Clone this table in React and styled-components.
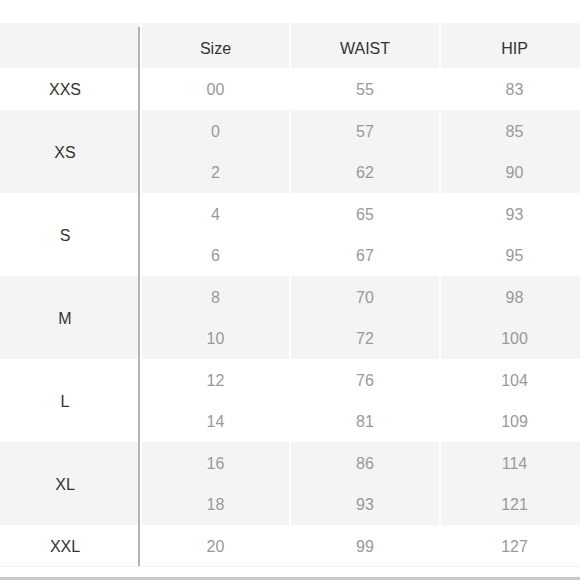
import React from "react";
import styled, { createGlobalStyle } from "styled-components";

const Global = createGlobalStyle`
  html, body { margin: 0; padding: 0; background: #fff; }
  body { width: 580px; height: 580px; overflow: hidden; font-family: "Liberation Sans", Arial, sans-serif; }
`;

const Page = styled.div`
  width: 580px;
  height: 580px;
  overflow: hidden;
  display: flex;
  flex-direction: column;
  padding-top: 23px;
  box-sizing: border-box;
`;

const Table = styled.div`
  margin-left: -8px;
  width: 598px;
  display: grid;
  grid-template-columns: 148px 147px 148px 147px;
  grid-template-rows: 45px;
  grid-auto-rows: 41.5px;
  column-gap: 2px;
  border-bottom: 1px solid #f2f2f2;
`;

const HeadCell = styled.div`
  background: #f4f4f4;
  display: flex;
  align-items: center;
  justify-content: center;
  padding-top: 6px;
  box-sizing: border-box;
  font-size: 16px;
  color: #333;
  position: relative;
  ${(p) =>
    p.$divider &&
    `
    &::after {
      content: "";
      position: absolute;
      right: 0;
      top: 4px;
      bottom: 0;
      width: 2px;
      background: #b3b3b3;
    }
  `}
`;

const LabelCell = styled.div`
  grid-row: span ${(p) => p.$span};
  background: ${(p) => (p.$shade ? "#f4f4f4" : "#fff")};
  border-right: 2px solid #b3b3b3;
  display: flex;
  align-items: center;
  justify-content: center;
  padding-top: 3px;
  font-size: 16px;
  color: #333;
`;

const ValueCell = styled.div`
  background: ${(p) => (p.$shade ? "#f4f4f4" : "#fff")};
  display: flex;
  align-items: center;
  justify-content: center;
  padding-top: 3px;
  font-size: 16px;
  color: #999;
`;

const HeadRow = styled.div`
  display: contents;
`;

const BottomSpace = styled.div`
  flex: 1;
`;

const BottomBar = styled.div`
  height: 3px;
  background: #c9c9c9;
`;

const groups = [
  { label: "XXS", rows: [["00", "55", "83"]] },
  { label: "XS", rows: [["0", "57", "85"], ["2", "62", "90"]] },
  { label: "S", rows: [["4", "65", "93"], ["6", "67", "95"]] },
  { label: "M", rows: [["8", "70", "98"], ["10", "72", "100"]] },
  { label: "L", rows: [["12", "76", "104"], ["14", "81", "109"]] },
  { label: "XL", rows: [["16", "86", "114"], ["18", "93", "121"]] },
  { label: "XXL", rows: [["20", "99", "127"]] },
];

export default function App() {
  return (
    <>
      <Global />
      <Page>
        <Table>
          <HeadRow>
            <HeadCell $divider />
            <HeadCell>Size</HeadCell>
            <HeadCell>WAIST</HeadCell>
            <HeadCell>HIP</HeadCell>
          </HeadRow>
          {groups.map((g, gi) => {
            const shade = gi % 2 === 1;
            return g.rows.map((r, ri) => (
              <React.Fragment key={g.label + ri}>
                {ri === 0 && (
                  <LabelCell $span={g.rows.length} $shade={shade}>
                    {g.label}
                  </LabelCell>
                )}
                {r.map((v, vi) => (
                  <ValueCell key={vi} $shade={shade}>
                    {v}
                  </ValueCell>
                ))}
              </React.Fragment>
            ));
          })}
        </Table>
        <BottomSpace />
        <BottomBar />
      </Page>
    </>
  );
}
